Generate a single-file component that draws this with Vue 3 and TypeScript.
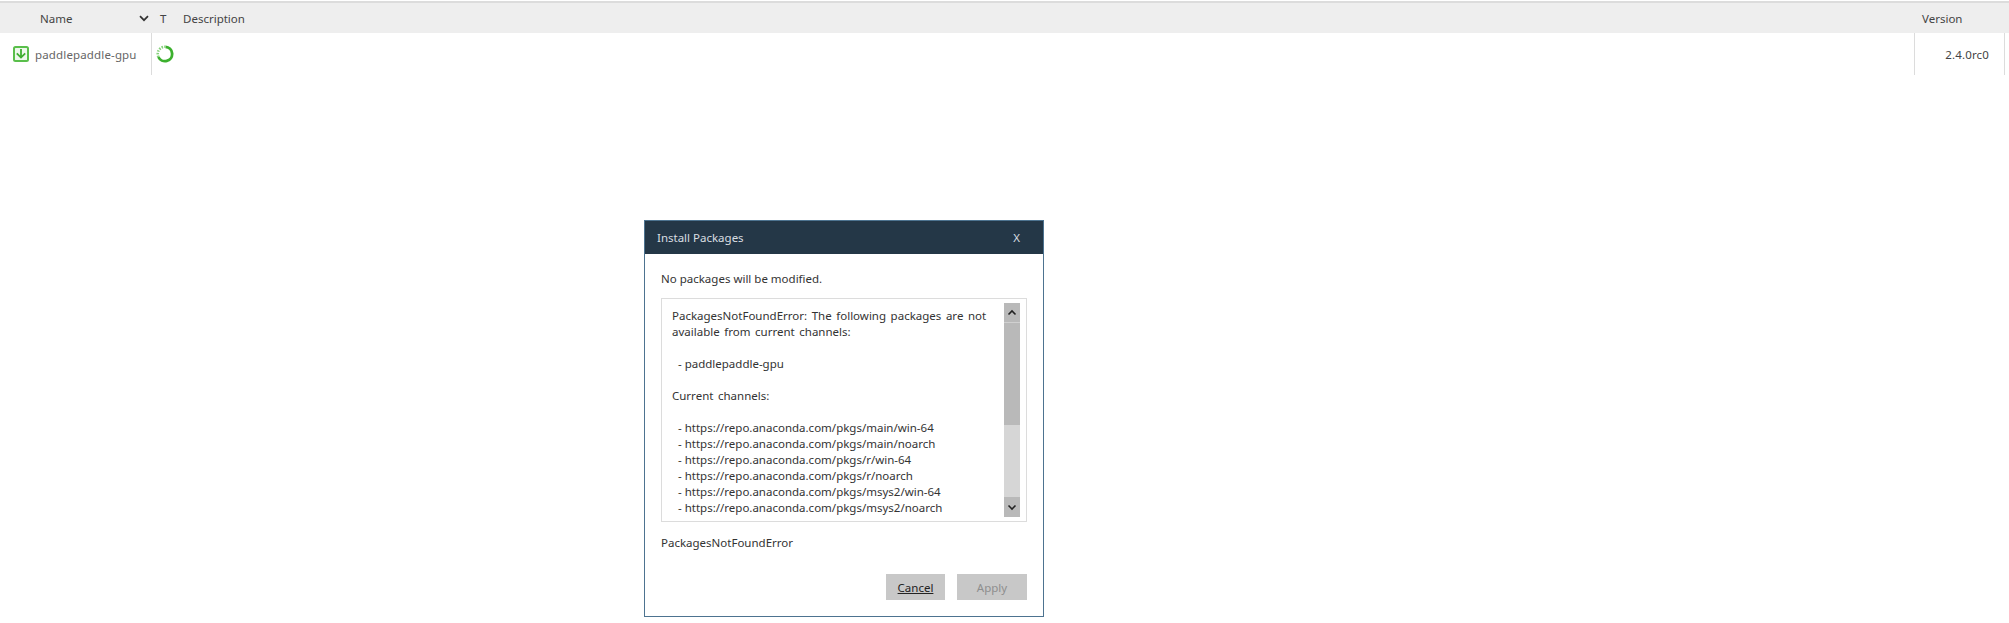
<script setup lang="ts">
interface OutputLine {
  text: string
  prose?: boolean
}

const outputLines: OutputLine[] = [
  { text: 'PackagesNotFoundError: The following packages are not', prose: true },
  { text: 'available from current channels:', prose: true },
  { text: '' },
  { text: '  - paddlepaddle-gpu' },
  { text: '' },
  { text: 'Current channels:', prose: true },
  { text: '' },
  { text: '  - https://repo.anaconda.com/pkgs/main/win-64' },
  { text: '  - https://repo.anaconda.com/pkgs/main/noarch' },
  { text: '  - https://repo.anaconda.com/pkgs/r/win-64' },
  { text: '  - https://repo.anaconda.com/pkgs/r/noarch' },
  { text: '  - https://repo.anaconda.com/pkgs/msys2/win-64' },
  { text: '  - https://repo.anaconda.com/pkgs/msys2/noarch' },
]
</script>

<template>
  <div class="page">
    <div class="table">
      <div class="head">
        <div class="head-name">
          <span>Name</span>
          <svg class="sort" width="10" height="7" viewBox="0 0 10 7">
            <path d="M1 1.2 5 5.2 9 1.2" fill="none" stroke="#333" stroke-width="1.7" />
          </svg>
        </div>
        <div class="head-type">T</div>
        <div class="head-desc">Description</div>
        <div class="head-version">Version</div>
      </div>
      <div class="row">
        <div class="cell-name">
          <svg class="pkg-icon" width="16" height="16" viewBox="0 0 16 16">
            <rect x="1" y="1" width="14" height="14" rx="1.5" fill="#eef8ec" stroke="#5abf4b" stroke-width="2" />
            <path d="M8 3v8.5M3.8 7.4 8 11.6l4.2-4.2" fill="none" stroke="#3fae31" stroke-width="1.8" />
          </svg>
          <span>paddlepaddle-gpu</span>
        </div>
        <div class="cell-type">
          <svg width="18" height="18" viewBox="0 0 18 18">
            <path d="M9.5 1.8A7.2 7.2 0 1 1 2.4 12" fill="none" stroke="#3cb02e" stroke-width="2.8" />
            <path d="M2.4 12A7.2 7.2 0 0 1 9.5 1.8" fill="none" stroke="#86d17b" stroke-width="2.6" stroke-dasharray="1.5 1.2" />
          </svg>
        </div>
        <div class="cell-desc"></div>
        <div class="cell-version">2.4.0rc0</div>
      </div>
    </div>

    <div class="modal">
      <div class="modal-head">
        <span>Install Packages</span>
        <span class="modal-close">X</span>
      </div>
      <div class="modal-body">
        <p class="summary">No packages will be modified.</p>
        <div class="output">
          <div class="output-text">
            <div
              v-for="(line, i) in outputLines"
              :key="i"
              class="output-line"
              :class="{ prose: line.prose }"
            >{{ line.text }}</div>
          </div>
          <div class="scrollbar">
            <div class="scroll-btn">
              <svg width="10" height="7" viewBox="0 0 10 7">
                <path d="M1.5 5.5 5 2l3.5 3.5" fill="none" stroke="#222" stroke-width="1.6" />
              </svg>
            </div>
            <div class="scroll-thumb"></div>
            <div class="scroll-track"></div>
            <div class="scroll-btn">
              <svg width="10" height="7" viewBox="0 0 10 7">
                <path d="M1.5 1.5 5 5l3.5-3.5" fill="none" stroke="#222" stroke-width="1.6" />
              </svg>
            </div>
          </div>
        </div>
        <p class="error-name">PackagesNotFoundError</p>
        <div class="actions">
          <button class="btn btn-cancel">Cancel</button>
          <button class="btn btn-apply">Apply</button>
        </div>
      </div>
    </div>
  </div>
</template>

<style>
body {
  background: #fff;
}
</style>

<style scoped>
.page {
  position: relative;
  width: 2009px;
  height: 623px;
  overflow: hidden;
  background: #fff;
  font-family: 'Noto Sans', 'Liberation Sans', sans-serif;
  font-size: 11.5px;
  color: #333;
}

.table {
  padding-top: 1px;
}

.head {
  display: flex;
  height: 30px;
  align-items: center;
  background: #eee;
  border-top: 2px solid #dcdcdc;
  color: #444;
}

.head-name {
  width: 152px;
  padding: 0 3px 0 40px;
  box-sizing: border-box;
  display: flex;
  align-items: center;
  justify-content: space-between;
}

.head-type {
  width: 31px;
  padding-left: 8px;
  box-sizing: border-box;
}

.head-desc {
  flex: 1;
}

.head-version {
  width: 87px;
}

.row {
  display: flex;
  height: 42px;
}

.cell-name {
  width: 152px;
  padding-left: 13px;
  box-sizing: border-box;
  display: flex;
  align-items: center;
  gap: 6px;
  color: #666;
  letter-spacing: 0.15px;
  border-right: 1px solid #dcdcdc;
}

.pkg-icon {
  flex: none;
}

.cell-type {
  width: 31px;
  padding: 12px 0 0 4px;
  box-sizing: border-box;
}

.cell-desc {
  flex: 1;
  border-right: 1px solid #dcdcdc;
}

.cell-version {
  width: 90px;
  box-sizing: border-box;
  padding-right: 15px;
  display: flex;
  align-items: center;
  justify-content: flex-end;
  border-right: 1px solid #dcdcdc;
  color: #444;
  letter-spacing: 0.15px;
  margin-right: 4px;
}

.modal {
  position: absolute;
  left: 644px;
  top: 220px;
  width: 400px;
  height: 397px;
  box-sizing: border-box;
  border: 1px solid #4d7390;
  background: #fff;
  display: flex;
  flex-direction: column;
}

.modal-head {
  height: 33px;
  flex: none;
  background: #243747;
  color: #d9dee2;
  display: flex;
  align-items: center;
  justify-content: space-between;
  padding: 0 23px 1px 12px;
  box-sizing: border-box;
}

.modal-body {
  padding: 0 16px 16px;
  flex: 1;
  display: flex;
  flex-direction: column;
}

.summary {
  margin: 16px 0 11px;
  line-height: 17px;
}

.output {
  height: 224px;
  box-sizing: border-box;
  border: 1px solid #dcdcdc;
  padding: 4px 6px 4px 10px;
  display: flex;
  justify-content: space-between;
}

.output-text {
  padding-top: 5px;
}

.output-line {
  height: 16px;
  line-height: 16px;
  white-space: pre;
}

.output-line.prose {
  word-spacing: 1.6px;
}

.scrollbar {
  width: 16px;
  display: flex;
  flex-direction: column;
}

.scroll-btn {
  height: 20px;
  flex: none;
  background: #b9b9b9;
  display: flex;
  align-items: center;
  justify-content: center;
  border-bottom: 1px solid #d0d0d0;
  box-sizing: border-box;
}

.scroll-btn:last-child {
  border-bottom: 0;
}

.scroll-thumb {
  height: 102px;
  flex: none;
  background: #b9b9b9;
}

.scroll-track {
  flex: 1;
  background: #d6d6d6;
}

.error-name {
  margin: 12px 0 0;
  line-height: 17px;
}

.actions {
  margin-top: auto;
  display: flex;
  justify-content: flex-end;
  gap: 12px;
}

.btn {
  height: 26px;
  border: 0;
  padding: 0;
  background: #c8c8c8;
  font: inherit;
}

.btn-cancel {
  width: 59px;
  color: #222;
  text-decoration: underline;
}

.btn-apply {
  width: 70px;
  color: #8e8e8e;
}
</style>
